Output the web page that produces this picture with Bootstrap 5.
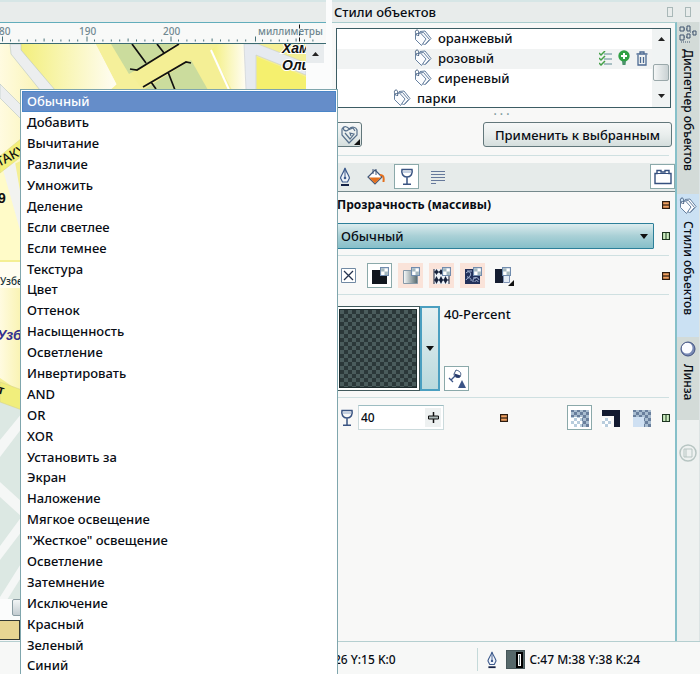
<!DOCTYPE html>
<html lang="ru">
<head>
<meta charset="utf-8">
<meta name="viewport" content="width=device-width, initial-scale=1">
<title>Стили объектов</title>
<link href="https://cdn.jsdelivr.net/npm/bootstrap@5.3.0/dist/css/bootstrap.min.css" rel="stylesheet">
<style>
body{font-family:"Noto Sans","Open Sans",sans-serif;font-size:12px;font-weight:500;line-height:20px;color:#080c14;background:#f7f8f7}
button,select,input{font:inherit;color:inherit}
svg{display:block;flex:none}
.app{height:100vh;overflow:hidden}
.work{display:grid;grid-template-columns:minmax(0,326fr) minmax(0,374fr);min-height:0}
.strip{height:23px;background:#e8eceb;border-top:2px solid #d6e6e6;border-bottom:1px solid #62adbb}
.ruler{height:21px;background:#f8f9f8;border-bottom:1px solid #3b6b72}
.map-view{background:#f7f5a5;min-height:0}
.map-view>div>svg{width:100%;height:100%}
.v-scroll{width:20px;background:#fbfcfc}
.scroll-btn{width:18px;height:19px;padding:0;border:0;background:#e8ecee}
.h-scroll{height:21px;padding-left:12px;background:#fbfcfc}
.thumb{height:17px;width:40px;border:1px solid #8b9da3;border-radius:2px;background:linear-gradient(#f2f5f6,#c3ccd0)}
.palette{height:21px;background:#f7f7f7}
.chip{width:20px;height:20px;padding:0;border:1px solid #333a33;border-left:0;background:#e7d692}
.dock{border-left:6px solid #fbfcfc}
.dock-title{height:22px;padding:0 9px 0 2px;font-size:13px;background:#e8eceb;border-top:2px solid #d6e6e6}
.glyph-box{width:6px;height:10px;border:1px solid #a9b8b8}
.panel{border-top:1px solid #a9cccd;border-right:2px solid #86c0c9;background:#f8f8f7}
.tree{height:80px;margin:5px 4px 0 4px;border:1px solid #3c5c63;background:#fff}
.tree-row{height:20px;padding-left:77px;font-size:13px;line-height:18px;padding-bottom:2px;gap:6px}
.tree-row.parent{padding-left:56px}
.tree-row.current{background:#f1f3f3}
.tree-scroll{width:18px;background:#f0f3f3}
.tree-thumb{width:16px;height:17px;border:1px solid #9aa8aa;border-radius:2px;background:linear-gradient(90deg,#f5f7f7,#c9d1d3)}
.plain{border:0;background:none;padding:0}
.dots{height:14px;line-height:14px;color:#7d9a9c;padding-right:4px}
.face{border:1px solid #62777b;border-radius:3px;background:linear-gradient(#f6f8f8,#e9eeed 50%,#d5dedd)}
.style-btn{width:30px;height:25px;padding:0 0 0 6px}
.apply-btn{width:189px;height:25px;font-size:13px;line-height:20px;margin-right:3px;padding:0}
.rule{height:1px;background:#cfe0e1;margin:6px 6px 7px 0}
.tabs-band{height:29px;padding:1px 0 2px;gap:6px;background:#e6ebea;border-bottom:1px solid #75898c}
.tool{width:25px;height:25px;padding:0;border:1px solid transparent;background:none;display:flex;align-items:center;justify-content:center}
.tool.on{background:#fff;border-color:#8ba9aa}
.tool.warm{background:#fae3d9}
.head-row{height:25px;font-size:12px;font-weight:700;padding-left:5px}
.marks{padding-right:5px}
.blend-row{padding-top:6px}
.blend{height:26px;padding:0 24px 0 8px;font-size:13px;line-height:22px;border:1px solid #2c7f99;border-radius:1px;appearance:none;
background:url("data:image/svg+xml,%3Csvg xmlns='http://www.w3.org/2000/svg' width='8' height='5'%3E%3Cpath d='M0 0h8L4 5z' fill='%23111'/%3E%3C/svg%3E") no-repeat right 5px center,linear-gradient(#dcecee,#a9d0d6 50%,#86bfc9)}
.icons-row{gap:6px;padding-left:4px}
.swatch{width:88px;height:85px;border:1px solid #41595c;padding:2px 2px 2px 6px;background:#fff}
.checker{width:100%;height:100%;background:repeating-conic-gradient(#2b3839 0 25%,#4a5c5c 0 50%) 0 0/8px 8px;border:1px solid #1d2b2c}
.swatch-drop{width:20px;height:85px;padding:0;border:2px solid #4b9fc0;background:linear-gradient(#e6f0f1,#b9d9dd);display:flex;align-items:center;justify-content:center}
.pct{font-size:13px;line-height:16px}
.num-box{width:86px;height:25px;border:1px solid #cbdadc;border-top-color:#9dbdc2;background:#fff;padding:0 2px}
.num-box input{width:50px;border:0;background:none;outline:0;padding:0;font-size:12px}
.step{width:16px;height:19px;background:#eef1f1}
.rail{width:23px;background:#eef1f0;border-right:1px solid #dde4e4}
.rail-tab{width:22px;padding:3px 0 8px;gap:6px;border:0;background:#d3dbd8;font-size:12px;line-height:16px;white-space:nowrap;writing-mode:vertical-rl;display:flex;align-items:center}
.rail-tab.active{background:#cbe1f3}
.rail-tab:nth-child(1){height:172px}
.rail-tab:nth-child(2){height:143px}
.rail-tab:nth-child(3){height:83px}
.status{height:33px;border-top:1px solid #b5cfd0;background:#f7f8f7;padding:3px 60px 0 334px;font-size:12px}
.status-sep{width:1px;height:23px;background:#c5dada}
.ink{width:19px;height:19px;background:#56686a;border:1px solid #47575a;padding:1px}
.ink span{width:7px;height:16px;border:2px solid #000;outline:1px solid #fff;outline-offset:-3px}
.blend-menu{position:absolute;left:20px;top:89px;bottom:-3px;width:318px;border:1px solid #7fa6ad;background:#fff;z-index:5;margin:0;padding:1px 1px 0;list-style:none}
.blend-menu li{flex:1 1 0;min-height:0}
.blend-menu button{width:100%;height:100%;padding:0 0 0 5px;border:0;background:none;text-align:left;display:flex;align-items:center;font-size:13px;line-height:16px}
.blend-menu .chosen{background:#658dc9;color:#fff;border:1px solid #4a86c8;padding-left:4px}
</style>
<script src="https://cdn.jsdelivr.net/npm/bootstrap@5.3.0/dist/js/bootstrap.bundle.min.js"></script>
</head>
<body>
<svg width="0" height="0" class="position-absolute" aria-hidden="true">
<defs>
<symbol id="tags" viewBox="0 0 18 18"><g fill="#fbfcfe" stroke="#66809f" stroke-width="1"><path d="M6 2.500l5-.5 6 7.500-5.500 6"/><path d="M4.500 4l5-.5 6 7-5 5.500-6-6z"/><path d="M1.500 5l5-1 5.500 6-4.500 6.500-6-6z"/></g><path d="M3.500 7C.5 4 1 1 3 1s2 3 1.500 6" fill="none" stroke="#4a6384"/></symbol>
<symbol id="pen" viewBox="0 0 12 20"><path d="M6 1C5 5 2 8 1.500 11L3.500 15h5l2-4C10 8 7 5 6 1z" fill="#eef3fa" stroke="#3d5a8c" stroke-width="1.200"/><path d="M6 3v7" stroke="#3d5a8c"/><circle cx="6" cy="11" r="1.300" fill="#3d5a8c"/><path d="M2 17h8v2H2z" fill="#152347"/></symbol>
<symbol id="glass" viewBox="0 0 14 18"><path d="M2 1.500h10c1 4-1 7.500-5 7.500S1 5.500 2 1.500zM7 9v7M3 16.300h8" fill="none" stroke="#3a5482" stroke-width="1.500"/><path d="M3 4h8" stroke="#8fa6c8"/></symbol>
<symbol id="m-orange" viewBox="0 0 8 8"><path d="M.5.5h7v7h-7z" fill="#f0a060" stroke="#2b1c10" stroke-width="1.300"/><path d="M1 4h6" stroke="#2b1c10" stroke-width="1.200"/></symbol>
<symbol id="m-green" viewBox="0 0 8 8"><path d="M.5.5h7v7h-7z" fill="#cdeec0" stroke="#1d3520" stroke-width="1.200"/><path d="M4 1v6" stroke="#1d3520"/></symbol>
<symbol id="corner" viewBox="0 0 8 8"><path d="M.5.500h7v7h-7z" fill="#fff" stroke="#718cae"/><path d="M1 1h3v3H1zM4 4h3v3H4z" fill="#a5b8bf"/></symbol>
<pattern id="chk" width="6" height="6" patternUnits="userSpaceOnUse"><path fill="#a9bdd0" d="M0 0h6v6H0z"/><path fill="#697f9d" d="M0 0h3v3H0zM3 3h3v3H3z"/></pattern>
<pattern id="chk2" width="6" height="6" patternUnits="userSpaceOnUse"><path fill="#fff" d="M0 0h6v6H0z"/><path fill="#b9cddd" d="M0 0h3v3H0zM3 3h3v3H3z"/></pattern>
<linearGradient id="gr"><stop stop-color="#fafcfc"/><stop offset="1" stop-color="#53686d"/></linearGradient>
<linearGradient id="y1"><stop stop-color="#f3ef7d"/><stop offset="1" stop-color="#fffdf4"/></linearGradient>
<linearGradient id="y2"><stop stop-color="#fdfad0"/><stop offset="1" stop-color="#f4ee72"/></linearGradient>
<linearGradient id="y3"><stop stop-color="#fffbe0"/><stop offset="1" stop-color="#f9f3b0"/></linearGradient>
</defs>
</svg>

<div class="app d-flex flex-column position-relative">
<main class="work flex-fill">
<section class="d-flex flex-column overflow-hidden" aria-label="Карта">
<div class="strip flex-shrink-0"></div>
<svg class="ruler w-100" height="21" viewBox="0 23 326 21" preserveAspectRatio="xMinYMid slice" font-size="10" fill="#6f8790">
<path d="M10.500 40v2m8.400-2v2m8.400-2v2m8.400-2v2m8.400-3v3m8.400-2v2m8.400-2v2m8.400-2v2m8.400-2v2m16.800-2v2m8.400-2v2m8.400-2v2m8.400-2v2m8.400-3v3m8.400-2v2m8.400-2v2m8.400-2v2m8.400-2v2m16.800-2v2m8.400-2v2m8.400-2v2m8.400-2v2m8.400-3v3m8.400-2v2m8.400-2v2m8.400-2v2m8.400-2v2m16.800-2v2m8.400-2v2m8.400-2v2m8.400-2v2m8.400-3v3m8.400-2v2m8.400-2v2" stroke="#48727a"/>
<path d="M2.500 37v5M87 37v5M171 37v5M255.500 37v5" stroke="#48727a"/><path d="M299.500 25v4M299.500 32v4M299.500 38v4" stroke="#111"/>
<text x="-1" y="35">80</text><text x="79" y="35">190</text><text x="163" y="35">200</text><text x="258" y="35">миллиметры</text></svg>
<div class="d-flex flex-fill map-view overflow-hidden">
<div class="flex-fill overflow-hidden">
<svg viewBox="0 44 306 556" preserveAspectRatio="xMinYMin slice">
<path fill="#f4ef95" d="M0 44h306v556H0z"/>
<path fill="url(#y3)" d="M0 44h12l34 46v60L0 170z"/>
<path fill="url(#y1)" d="M21 44h75l21 40-18 16H55L21 50z"/>
<path fill="#eceeef" d="M10 44h11l0 6 34 40H40L11 54zM0 84l22 22v14L0 98z" stroke="#b9c6c2" stroke-width=".6"/>
<path fill="#f5f09a" d="M96 44h15l22 32 10 14h-30l4-5z"/>
<path fill="#cbdc9d" d="M111 44h65l-40 26-7 4z"/><path fill="#cbdc9d" d="M143 90l48-30 17 30z"/>
<path fill="none" stroke="#111" stroke-width="1.700" d="M130 69l7 1 42-26M132 44l14 19M157 44l7 9M143 87l43-25 5 1M168 72l7 18M151 82l5 7"/>
<path fill="url(#y1)" d="M232 90l-21-40 8-6h27v50z"/><path stroke="#fff" stroke-width="2" d="M211 50l19 42"/>
<path fill="#e6eaf0" d="M244 44h14l48 19v12l-50-20v35h-10z" stroke="#c8cdd0" stroke-width=".6"/>
<path fill="#f5f06e" d="M257 57l49 20v14h-49z"/>
<g font-family="Liberation Sans" font-weight="700" font-style="italic" font-size="14" fill="#111" stroke="#fff" stroke-width="2" paint-order="stroke"><text x="282" y="53">Хамида</text><text x="282" y="70">Олимджана</text></g>
<path fill="#fffbc8" d="M0 160l22 60v40H0z"/><path fill="#f2f3f0" d="M3 170l12-8 7 40v35z"/><path fill="#f4f07a" d="M0 156l22-18v18L0 173z" stroke="#dcd98c" stroke-width=".6"/>
<text transform="translate(-1 167) rotate(-28)" font-size="13" fill="#111">ТАКУ</text>
<path fill="#fffdf0" d="M0 262h22v26H0z"/><path fill="url(#y3)" d="M0 288h22v105L0 378z"/>
<text x="-2" y="203" font-size="14" font-weight="700" font-family="Liberation Sans" fill="#111">9</text>
<text x="0" y="285" font-size="10" fill="#18323a">Узбе</text>
<text x="-3" y="340" font-size="14" font-weight="700" font-style="italic" font-family="Liberation Sans" fill="#33308e">Узб</text>
<path fill="#dce8e3" d="M0 398h22v202H0z"/><path fill="#f1ee7c" d="M0 382l22 8v20L0 402z" stroke="#d7d489" stroke-width=".6"/>
<text x="-3" y="394" font-size="13" font-weight="700" font-family="Liberation Sans" fill="#111" transform="rotate(15 0 394)">т</text>
<path fill="#f5f7f6" d="M0 440l22-27v15L0 457zM0 482l22 20v15L0 497zM0 546l22-30v15L0 560zM0 597l22-35v14L7 600H0z"/>
</svg></div>
<div class="v-scroll"><button class="scroll-btn d-flex align-items-center justify-content-center" aria-label="Вверх"><svg width="7" height="4"><path d="M0 4h7L3.500 0z" fill="#222"/></svg></button></div>
</div>
<div class="h-scroll flex-shrink-0"><div class="thumb"></div></div>
<div class="palette flex-shrink-0"><button class="chip d-block" aria-label="Цвет палитры"></button></div>
</section>

<section class="dock d-flex flex-column" aria-label="Стили объектов">
<header class="dock-title d-flex align-items-center flex-shrink-0"><span class="me-auto">Стили объектов</span><span class="glyph-box me-2"></span><span class="glyph-box ms-1"></span></header>
<div class="d-flex flex-fill">
<div class="panel flex-fill">
<div class="tree d-flex overflow-hidden">
<div class="flex-fill">
<div class="tree-row d-flex align-items-center"><svg width="18" height="18"><use href="#tags"/></svg>оранжевый</div>
<div class="tree-row current d-flex align-items-center"><svg width="18" height="18"><use href="#tags"/></svg><span class="me-auto">розовый</span>
<button class="plain" aria-label="Выбрать"><svg width="13" height="15" viewBox="0 0 13 15"><path d="M5 3h8M5 8h8M5 13h8" stroke="#5d8a93"/><path d="M0 2l2 2 4-4M0 7l2 2 4-4M0 12l2 2 4-4" stroke="#43a047" stroke-width="1.500" fill="none"/></svg></button>
<button class="plain" aria-label="Добавить"><svg width="12" height="16" viewBox="0 0 12 16"><circle cx="6" cy="6" r="5.700" fill="#2fa043"/><path d="M4 11h4l-.5 4h-3z" fill="#4a936a"/><path d="M6 3v6M3 6h6" stroke="#fff" stroke-width="2"/></svg></button>
<button class="plain me-1" aria-label="Удалить"><svg width="12" height="15" viewBox="0 0 12 15"><path d="M.5 3h11M4 3V1h4v2M2 4v10h8V4M4.500 6v6M7.500 6v6" fill="none" stroke="#4c6a92" stroke-width="1.300"/></svg></button></div>
<div class="tree-row d-flex align-items-center"><svg width="18" height="18"><use href="#tags"/></svg>сиреневый</div>
<div class="tree-row parent d-flex align-items-center"><svg width="18" height="18"><use href="#tags"/></svg>парки</div>
</div>
<div class="tree-scroll d-flex flex-column align-items-center justify-content-between py-2"><svg width="7" height="5"><path d="M0 4h7L3.500 0z" fill="#222"/></svg><div class="tree-thumb mt-2"></div><svg width="7" height="5"><path d="M0 0h7L3.500 4z" fill="#222"/></svg></div>
</div>
<div class="dots text-center">· · ·</div>
<div class="d-flex justify-content-between align-items-center">
<button class="face style-btn" aria-label="Стиль"><svg width="22" height="22" viewBox="0 0 22 22"><g fill="none" stroke="#57708c" stroke-width="1.200"><path d="M3 5c2-4 6-2 7 0 3-3 7-2 8 1v5l-8 8-7-8z"/><path d="M6 9l5 6 4-5-4-1 1 3M5 3c-2 3 2 5 4 3l5-2 2 3"/></g><path d="M21 15v6h-6z" fill="#111"/></svg></button>
<button class="face apply-btn">Применить к выбранным</button></div>
<div class="rule mt-2"></div>
<nav class="tabs-band d-flex" aria-label="Свойства">
<button class="tool" aria-label="Абрис"><svg width="12" height="20"><use href="#pen"/></svg></button>
<button class="tool" aria-label="Заливка"><svg width="18" height="18" viewBox="0 0 18 18"><path d="M8 2l7 7-7 7-7-7z" fill="#fff" stroke="#405779" stroke-width="1.200"/><path d="M2 9.500h12l-6 6z" fill="#e2701f"/><path d="M6 1v5M9 1v6" stroke="#405779"/><path d="M13 7c4 0 4 3 3.500 7" fill="none" stroke="#e2701f" stroke-width="2"/></svg></button>
<button class="tool on" aria-label="Прозрачность"><svg width="14" height="18"><use href="#glass"/></svg></button>
<button class="tool" aria-label="Абзац"><svg width="14" height="14" viewBox="0 0 14 14"><path d="M0 1.500h14M0 4.500h14M0 7.500h14M0 10.500h14M0 13.500h5" stroke="#66799b"/></svg></button>
<button class="tool on ms-auto" aria-label="Папка"><svg width="18" height="16" viewBox="0 0 18 16"><path d="M1 4.500h2v-3h4v1.500h4V1.500h4v3h2v10H1z" fill="#fff" stroke="#35507f" stroke-width="1.400"/><path d="M3 4.500h12" stroke="#35507f"/></svg></button>
</nav>
<div class="head-row d-flex align-items-center"><span class="me-auto">Прозрачность (массивы)</span><span class="marks"><svg width="8" height="8"><use href="#m-orange"/></svg></span></div>
<div class="blend-row d-flex align-items-center"><select class="blend flex-fill me-2" aria-label="Режим слияния"><option>Обычный</option></select><span class="marks"><svg width="8" height="8"><use href="#m-green"/></svg></span></div>
<div class="rule"></div>
<div class="icons-row d-flex align-items-center">
<button class="tool" aria-label="Нет"><svg width="15" height="15" viewBox="0 0 15 15"><path d="M.5.5h14v14H.5z" fill="#fff" stroke="#7189a3"/><path d="M3 3l9 9M12 3l-9 9" stroke="#24324e" stroke-width="1.300"/></svg></button>
<button class="tool on" aria-label="Однородная"><svg width="18" height="18" viewBox="0 0 18 18"><path d="M1 3h15v14H1z" fill="#10151d"/><use href="#corner" x="9" y="0" width="9" height="9"/></svg></button>
<button class="tool warm" aria-label="Фонтанная"><svg width="18" height="18" viewBox="0 0 18 18"><path d="M1.500 3.500h14v13h-14z" fill="url(#gr)" stroke="#8799a8"/><use href="#corner" x="9" y="0" width="9" height="9"/></svg></button>
<button class="tool warm" aria-label="Узор"><svg width="18" height="18" viewBox="0 0 18 18"><path d="M1 2h15v15H1z" fill="#eef2f8"/><path d="M3.500 2l2 3-2 3-2-3zM8 2l2 3-2 3-2-3zM3.500 9l2 4-2 4-2-4zM8 9l2 4-2 4-2-4zM12.500 9l2 4-2 4-2-4z" fill="#16203a"/><path d="M1 5h15M1 13h15M1 2v15M16 9v8" stroke="#16203a"/><use href="#corner" x="9" y="0" width="9" height="9"/></svg></button>
<button class="tool warm" aria-label="Текстура"><svg width="18" height="18" viewBox="0 0 18 18"><path d="M1 2h15v15H1z" fill="#22305a"/><path d="M2 6c3-3 6 0 4 3s-3 1-2 0M2 13c2-4 6-2 5 1M9 15c-1-5 5-6 6-2M11 15c0-2 3-2 3 0M3 4h5M9 11h3" stroke="#a9b8d6" fill="none"/><use href="#corner" x="9" y="0" width="9" height="9"/></svg></button>
<button class="tool me-auto" aria-label="Двухцветная"><svg width="20" height="20" viewBox="0 0 20 20"><path d="M1 3h8v14H1z" fill="#141c30"/><path d="M9.500 9.500h6v7h-6z" fill="#e3ebf5" stroke="#8094b5"/><use href="#corner" x="8" y="1" width="9" height="9"/><path d="M20 14v6h-6z" fill="#111"/></svg></button>
<span class="marks"><svg width="8" height="8"><use href="#m-orange"/></svg></span></div>
<div class="rule"></div>
<div class="d-flex pt-1">
<button class="swatch" aria-label="Узор прозрачности"><span class="checker d-block"></span></button>
<button class="swatch-drop" aria-label="Выбрать узор"><svg width="8" height="5"><path d="M0 0h8L4 5z" fill="#111"/></svg></button>
<div class="d-flex flex-column justify-content-between ms-1"><div class="pct">40-Percent</div>
<button class="tool on" aria-label="Редактировать"><svg width="18" height="20" viewBox="0 0 18 20"><path d="M8 1c4 1 6 3 4 7-3 1-6 0-6-3z" fill="#fff" stroke="#3d5680"/><path d="M6.500 4.500l6 2-1 2c-3 1-5-1-5-4z" fill="#26396b"/><path d="M7 7l-4 4M1 9l4 4" fill="none" stroke="#3b5487" stroke-width="1.300"/><path d="M10 19l4-8 4 8z" fill="#3b5487"/></svg></button></div></div>
<div class="rule"></div>
<div class="d-flex align-items-center ps-2">
<svg width="14" height="18"><use href="#glass"/></svg>
<div class="num-box d-flex align-items-center justify-content-between ms-1"><input id="opacity" type="text" value="40" aria-label="Прозрачность"><span class="step d-flex align-items-center justify-content-center"><svg width="11" height="11" viewBox="0 0 11 11"><path d="M5.500 0v11" stroke="#111" stroke-width="1.500"/><path d="M.5 4h10v3H.5z" fill="#aeb9b9" stroke="#111"/></svg></span></div>
<svg class="mx-auto" width="8" height="8"><use href="#m-orange"/></svg>
<div class="icons-row d-flex pe-2">
<button class="tool on" aria-label="Всё"><svg width="18" height="18"><path fill="url(#chk)" d="M0 1h18v17H0z"/><path fill="url(#chk2)" d="M0 8h11v10H0z"/></svg></button>
<button class="tool" aria-label="Абрис"><svg width="18" height="18"><path fill="#131a30" d="M0 1h18v17h-6V7H0z"/><path fill="url(#chk2)" d="M0 9h9v9H0z"/></svg></button>
<button class="tool" aria-label="Заливка"><svg width="18" height="18"><path fill="url(#chk)" d="M0 1h18v17h-7V8H0z"/><path fill="#cfe0f2" d="M0 8h11v10H0z"/></svg></button></div>
<span class="marks"><svg width="8" height="8"><use href="#m-green"/></svg></span></div>
</div>
<nav class="rail flex-shrink-0 d-flex flex-column" aria-label="Докеры">
<button class="rail-tab"><svg width="18" height="18" viewBox="0 0 18 18"><g fill="none" stroke="#40556f"><path d="M1 2h4v4H1zM1 10h4v5H1zM8 1h3v5H8zM8 9h3v4H8zM14 6h3v4h-3z"/><path d="M5 4h3M5 12h3M11 7h3M2 17h9" stroke-dasharray="1 1"/></g></svg>Диспетчер объектов</button>
<button class="rail-tab active"><svg width="18" height="18"><use href="#tags"/></svg>Стили объектов</button>
<button class="rail-tab"><svg width="16" height="18" viewBox="0 0 16 18"><circle cx="8" cy="9" r="7" fill="#7a8bb5"/><circle cx="7" cy="8" r="5.500" fill="#fbfcff"/><circle cx="8" cy="9" r="7" fill="none" stroke="#405080"/></svg>Линза</button>
<button class="plain mt-4 mx-auto" aria-label="Настройка"><svg width="18" height="18" viewBox="0 0 18 18"><circle cx="9" cy="9" r="8" fill="none" stroke="#b7c5c2" stroke-width="1.500"/><path d="M5 5h8v8H5zM7 5v8" fill="none" stroke="#b7c5c2"/></svg></button>
</nav>
</div>
</section>
</main>
<footer class="status d-flex align-items-center flex-shrink-0"><span>26 Y:15 K:0</span><span class="status-sep ms-auto"></span><svg class="mx-2" width="12" height="18"><use href="#pen"/></svg><span class="ink d-flex justify-content-end"><span></span></span><span class="ms-1">C:47 M:38 Y:38 K:24</span></footer>

<ul class="blend-menu d-flex flex-column" aria-label="Режимы слияния">
<li><button class="chosen">Обычный</button></li>
<li><button>Добавить</button></li>
<li><button>Вычитание</button></li>
<li><button>Различие</button></li>
<li><button>Умножить</button></li>
<li><button>Деление</button></li>
<li><button>Если светлее</button></li>
<li><button>Если темнее</button></li>
<li><button>Текстура</button></li>
<li><button>Цвет</button></li>
<li><button>Оттенок</button></li>
<li><button>Насыщенность</button></li>
<li><button>Осветление</button></li>
<li><button>Инвертировать</button></li>
<li><button>AND</button></li>
<li><button>OR</button></li>
<li><button>XOR</button></li>
<li><button>Установить за</button></li>
<li><button>Экран</button></li>
<li><button>Наложение</button></li>
<li><button>Мягкое освещение</button></li>
<li><button>"Жесткое" освещение</button></li>
<li><button>Осветление</button></li>
<li><button>Затемнение</button></li>
<li><button>Исключение</button></li>
<li><button>Красный</button></li>
<li><button>Зеленый</button></li>
<li><button>Синий</button></li>
</ul>
</div>
</body>
</html>
